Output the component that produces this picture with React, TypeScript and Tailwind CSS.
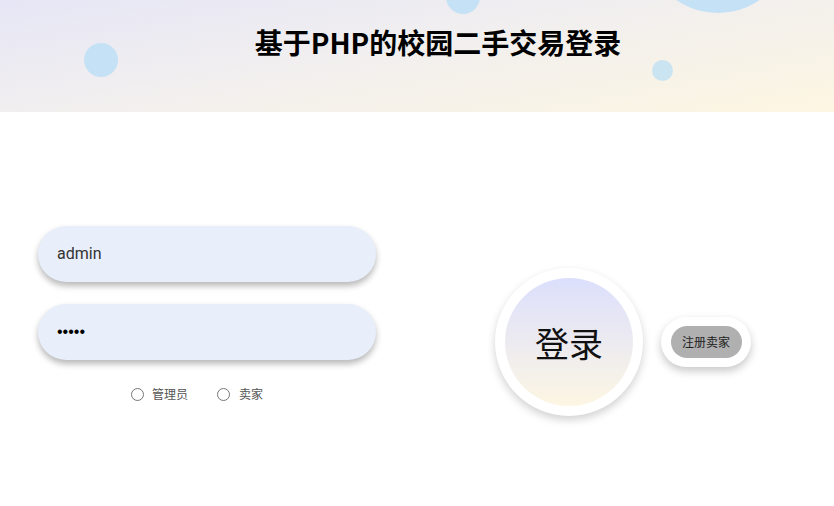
import React from "react";

export default function App() {
  return (
    <div className="w-[834px] h-[506px] bg-white overflow-hidden" style={{ fontFamily: '"Liberation Sans", Roboto, "Noto Sans CJK SC", sans-serif' }}>
      <header className="relative h-[112px] overflow-hidden bg-[linear-gradient(170deg,#e6e6f6_0%,#f1efef_45%,#fdf6e2_100%)]">
        <div className="absolute left-[84px] top-[43px] w-[34px] h-[34px] rounded-full bg-[#c5e1f5]" />
        <div className="absolute left-[446px] top-[-20px] w-[34px] h-[34px] rounded-full bg-[#c5e1f5]" />
        <div className="absolute left-[645px] top-[-133px] w-[146px] h-[146px] rounded-full bg-[#c5e1f5]" />
        <div className="absolute left-[652px] top-[60px] w-[21px] h-[21px] rounded-full bg-[#cbe4f1]" />
        <div className="relative flex justify-center pl-[42px] pt-[22px]">
          <h1 className="text-[28px] leading-[40px] font-bold text-black" style={{ fontFamily: '"Noto Sans CJK SC", sans-serif' }}>
            基于PHP的校园二手交易登录
          </h1>
        </div>
      </header>
      <main className="flex items-start">
        <div className="ml-[38px] mt-[114px] w-[338px] flex flex-col">
          <div className="h-[56px] rounded-full bg-[#e8eefa] shadow-[0_4px_6px_rgba(0,0,0,0.28)] flex items-center pl-[19px] text-[16px] text-[#333]" style={{ fontFamily: 'Roboto, "Liberation Sans", sans-serif' }}>
            admin
          </div>
          <div className="mt-[22px] h-[56px] rounded-full bg-[#e8eefa] shadow-[0_4px_6px_rgba(0,0,0,0.28)] flex items-center pl-[19px] text-[16px] text-black">
            •••••
          </div>
          <div className="mt-[25px] flex items-center justify-center pr-[20px] text-[12px] text-[#555]" style={{ fontFamily: '"Noto Sans CJK SC", sans-serif' }}>
            <label className="flex items-center">
              <span className="w-[13px] h-[13px] rounded-full border border-[#767676] bg-white" />
              <span className="ml-[8px]">管理员</span>
            </label>
            <label className="flex items-center ml-[29px]">
              <span className="w-[13px] h-[13px] rounded-full border border-[#767676] bg-white" />
              <span className="ml-[9px]">卖家</span>
            </label>
          </div>
        </div>
        <div className="ml-[119px] mt-[156px] flex items-center">
          <div className="w-[148px] h-[148px] rounded-full bg-white shadow-[0_4px_8px_rgba(0,0,0,0.18)] flex items-center justify-center">
            <div className="w-[128px] h-[128px] rounded-full bg-gradient-to-b from-[#dcdffc] to-[#fdf6e3] flex items-center justify-center text-[34px] text-[#111]" style={{ fontFamily: '"Noto Sans CJK SC", sans-serif' }}>
              登录
            </div>
          </div>
          <div className="ml-[18px] w-[90px] h-[50px] rounded-full bg-white shadow-[0_4px_8px_rgba(0,0,0,0.22)] flex items-center justify-center">
            <div className="w-[71px] h-[32px] rounded-full bg-[#b0b0b0] flex items-center justify-center text-[12px] text-[#222]" style={{ fontFamily: '"Noto Sans CJK SC", sans-serif' }}>
              注册卖家
            </div>
          </div>
        </div>
      </main>
    </div>
  );
}
